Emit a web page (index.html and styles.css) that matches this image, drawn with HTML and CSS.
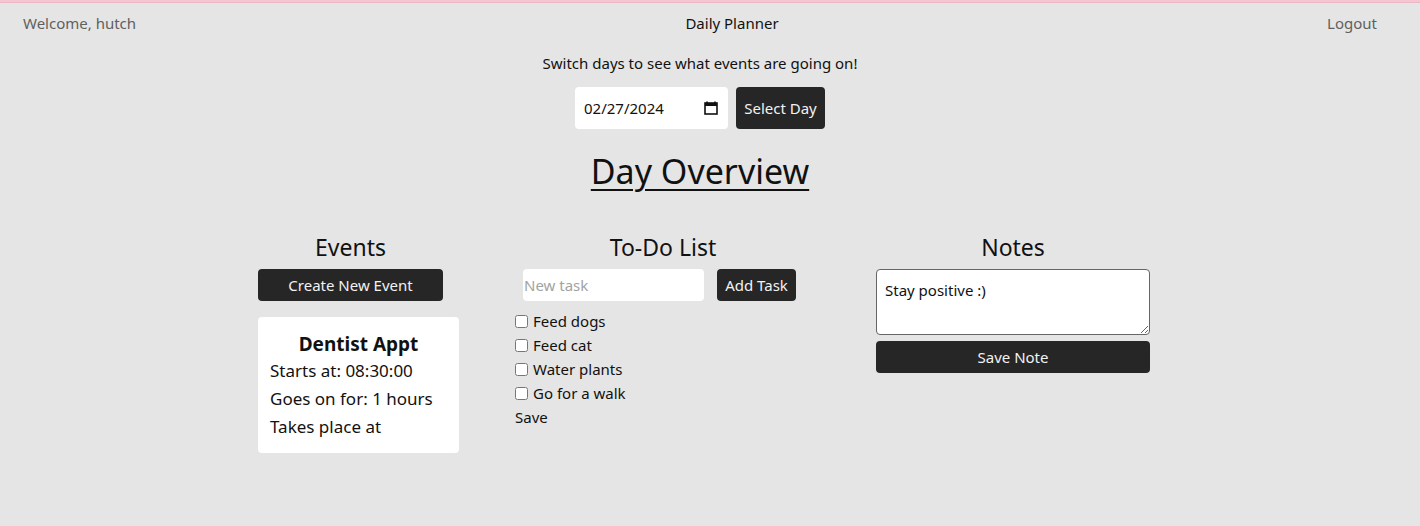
FILE: index.html
```html
<!DOCTYPE html>
<html lang="en">
<head>
<meta charset="utf-8">
<title>Daily Planner</title>
<link rel="stylesheet" href="styles.css">
</head>
<body>
<div class="topline"></div>
<nav class="navbar">
  <span class="nav-link">Welcome, hutch</span>
  <span class="brand">Daily Planner</span>
  <span class="nav-link">Logout</span>
</nav>
<main class="page">
  <p class="switch">Switch days to see what events are going on!</p>
  <form class="day-form">
    <div class="date-input">
      <span>02/27/2024</span>
      <svg class="cal" width="14" height="14" viewBox="0 0 14 14"><path d="M3 0.5v2M11 0.5v2" stroke="#111" stroke-width="1.6"/><rect x="1" y="2" width="12" height="11" fill="none" stroke="#111" stroke-width="1.6"/><rect x="1" y="2" width="12" height="3" fill="#111"/></svg>
    </div>
    <button type="button" class="btn btn-tall">Select Day</button>
  </form>
  <h1 class="title">Day Overview</h1>
  <section class="columns">
    <div class="col col-events">
      <h2 class="col-title">Events</h2>
      <button type="button" class="btn btn-block">Create New Event</button>
      <div class="event-card">
        <h3 class="event-name">Dentist Appt</h3>
        <p class="event-line">Starts at: 08:30:00</p>
        <p class="event-line">Goes on for: 1 hours</p>
        <p class="event-line">Takes place at</p>
      </div>
    </div>
    <div class="col col-todo">
      <h2 class="col-title">To-Do List</h2>
      <div class="task-form">
        <input class="task-input" type="text" placeholder="New task">
        <button type="button" class="btn btn-task">Add Task</button>
      </div>
      <ul class="task-list">
        <li><label><input type="checkbox"> Feed dogs</label></li>
        <li><label><input type="checkbox"> Feed cat</label></li>
        <li><label><input type="checkbox"> Water plants</label></li>
        <li><label><input type="checkbox"> Go for a walk</label></li>
      </ul>
      <div class="save-link">Save</div>
    </div>
    <div class="col col-notes">
      <h2 class="col-title">Notes</h2>
      <textarea class="note">Stay positive :)</textarea>
      <button type="button" class="btn btn-block">Save Note</button>
    </div>
  </section>
</main>
</body>
</html>
```
FILE: styles.css
```css
html, body {
  margin: 0;
  padding: 0;
}
body {
  background: #e5e5e5;
  font-family: "Noto Sans", "Open Sans", sans-serif;
  color: #111;
  font-size: 15px;
  height: 526px;
  overflow: hidden;
}
.topline {
  height: 2px;
  background: #f7c5d1;
  border-bottom: 1px solid #e9b9c5;
}
.navbar {
  display: flex;
  justify-content: space-between;
  align-items: center;
  height: 40px;
  padding: 0 43px 0 23px;
}
.nav-link {
  color: #5f5f5f;
  width: 120px;
}
.nav-link:last-child {
  text-align: right;
  width: 60px;
}
.brand {
  color: #111;
  margin-left: 4px;
}
.page {
  width: 1400px;
  display: flex;
  flex-direction: column;
  align-items: center;
}
.switch {
  margin: 10px 0 13px;
  line-height: 21px;
}
.day-form {
  display: flex;
  gap: 8px;
}
.date-input {
  width: 153px;
  height: 42px;
  box-sizing: border-box;
  background: #fff;
  border-radius: 4px;
  display: flex;
  align-items: center;
  justify-content: space-between;
  padding: 0 10px 0 9px;
  font-size: 15px;
  color: #111;
}
.btn {
  background: #262626;
  color: #f2f2f2;
  border: none;
  border-radius: 4px;
  font-family: inherit;
  font-size: 15px;
  padding: 0 8px;
  cursor: pointer;
}
.btn-tall {
  height: 42px;
  width: 89px;
}
.title {
  font-size: 34px;
  font-weight: 400;
  text-decoration: underline;
  text-underline-offset: 5px;
  text-decoration-thickness: 2px;
  margin: 16px 0 0;
  line-height: 52px;
}
.columns {
  align-self: stretch;
  display: flex;
  align-items: flex-start;
  padding-left: 258px;
  margin-top: 34px;
}
.col {
  display: flex;
  flex-direction: column;
}
.col-title {
  font-size: 23px;
  font-weight: 400;
  margin: 0 0 6px;
  line-height: 32px;
  text-align: center;
}
.col-events {
  width: 185px;
}
.btn-block {
  height: 32px;
  width: 100%;
}
.event-card {
  margin-top: 16px;
  background: #fff;
  border-radius: 4px;
  width: 201px;
  box-sizing: border-box;
  padding: 14px 12px 12px;
}
.event-name {
  font-size: 19px;
  font-weight: 700;
  margin: 0;
  text-align: center;
  line-height: 26px;
}
.event-line {
  font-size: 17px;
  margin: 0;
  line-height: 28px;
}
.col-todo {
  width: 296px;
  margin-left: 72px;
}
.task-form {
  display: flex;
  justify-content: center;
  gap: 13px;
  padding-right: 7px;
}
.task-input {
  width: 181px;
  height: 32px;
  box-sizing: border-box;
  border: none;
  border-radius: 4px;
  background: #fff;
  font-family: inherit;
  font-size: 15px;
  padding: 0 1px;
}
.task-input::placeholder {
  color: #a3a3a3;
}
.btn-task {
  height: 32px;
  width: 79px;
}
.task-list {
  list-style: none;
  margin: 8px 0 0;
  padding: 0;
}
.task-list li {
  line-height: 24px;
  height: 24px;
}
.task-list label {
  display: flex;
  align-items: center;
}
.task-list input {
  width: 13px;
  height: 13px;
  margin: 0 5px 0 0;
}
.save-link {
  line-height: 24px;
}
.col-notes {
  width: 274px;
  margin-left: 65px;
}
.note {
  height: 66px;
  box-sizing: border-box;
  border: 1px solid #666;
  border-radius: 4px;
  font-family: inherit;
  font-size: 15px;
  padding: 10px 8px;
  margin: 0 0 6px;
  color: #111;
  resize: vertical;
}
```
